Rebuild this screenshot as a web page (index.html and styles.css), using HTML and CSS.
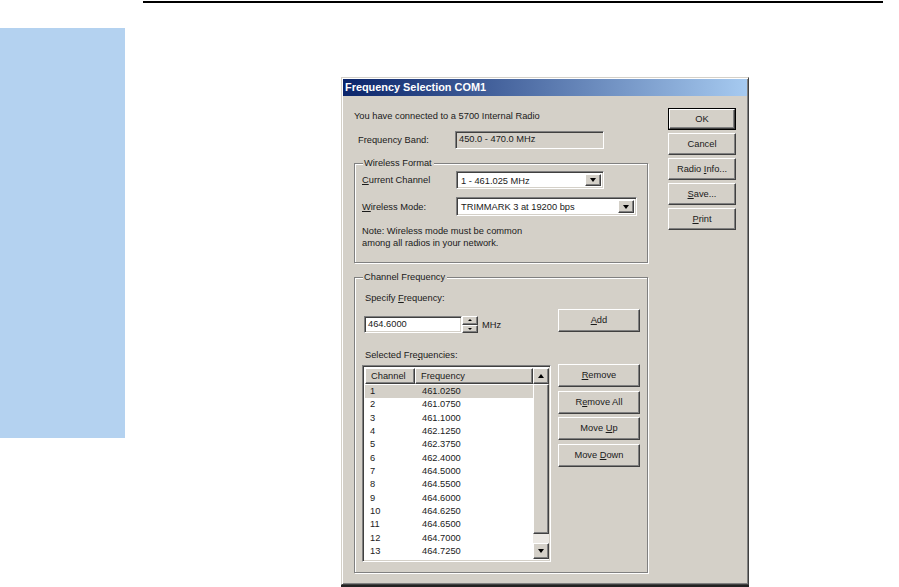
FILE: index.html
```html
<!DOCTYPE html>
<html>
<head>
<meta charset="utf-8">
<link rel="stylesheet" href="styles.css">
</head>
<body>
<div class="page">
  <div class="topline"></div>
  <div class="stage">
    <div class="sidebar"></div>
    <div class="dialog">
      <div class="titlebar">Frequency Selection COM1</div>
      <div class="client">
        <div class="main">
          <div class="intro">You have connected to a 5700 Internal Radio</div>
          <div class="bandrow">
            <span class="bandlbl">Frequency Band:</span>
            <div class="field sunken">450.0 - 470.0 MHz</div>
          </div>

          <div class="group wf">
            <span class="legend">Wireless Format</span>
            <div class="frow r1">
              <span class="flbl"><u>C</u>urrent Channel</span>
              <div class="combo sunken c1"><span class="ctext">1 - 461.025 MHz</span><span class="dbtn raised"><i class="tri-down"></i></span></div>
            </div>
            <div class="frow r2">
              <span class="flbl"><u>W</u>ireless Mode:</span>
              <div class="combo sunken c2"><span class="ctext">TRIMMARK 3 at 19200 bps</span><span class="dbtn raised"><i class="tri-down"></i></span></div>
            </div>
            <div class="note">Note: Wireless mode must be common<br>among all radios in your network.</div>
          </div>

          <div class="group cf">
            <span class="legend">Channel Frequency</span>
            <div class="cfrow">
              <div class="cfleft">
                <div class="lbl">Specify <u>F</u>requency:</div>
                <div class="editrow">
                  <div class="edit sunken">464.6000</div>
                  <div class="spin">
                    <span class="sbtn raised"><i class="tri-up sm"></i></span>
                    <span class="sbtn raised"><i class="tri-down sm"></i></span>
                  </div>
                  <span class="unit">MHz</span>
                </div>
              </div>
              <div class="btn addbtn raised"><u>A</u>dd</div>
            </div>
            <div class="cfrow2">
              <div class="cfleft">
                <div class="lbl sel">Selected Fre<u>q</u>uencies:</div>
                <div class="listbox sunken">
                  <div class="lvmain">
                    <div class="lvhead">
                      <span class="hcell h1 raised">Channel</span>
                      <span class="hcell h2 raised">Frequency</span>
                    </div>
                    <div class="rows">
                      <div class="lrow selrow"><span class="cn">1</span><span class="fq">461.0250</span></div>
                      <div class="lrow"><span class="cn">2</span><span class="fq">461.0750</span></div>
                      <div class="lrow"><span class="cn">3</span><span class="fq">461.1000</span></div>
                      <div class="lrow"><span class="cn">4</span><span class="fq">462.1250</span></div>
                      <div class="lrow"><span class="cn">5</span><span class="fq">462.3750</span></div>
                      <div class="lrow"><span class="cn">6</span><span class="fq">462.4000</span></div>
                      <div class="lrow"><span class="cn">7</span><span class="fq">464.5000</span></div>
                      <div class="lrow"><span class="cn">8</span><span class="fq">464.5500</span></div>
                      <div class="lrow"><span class="cn">9</span><span class="fq">464.6000</span></div>
                      <div class="lrow"><span class="cn">10</span><span class="fq">464.6250</span></div>
                      <div class="lrow"><span class="cn">11</span><span class="fq">464.6500</span></div>
                      <div class="lrow"><span class="cn">12</span><span class="fq">464.7000</span></div>
                      <div class="lrow"><span class="cn">13</span><span class="fq">464.7250</span></div>
                    </div>
                  </div>
                  <div class="vscroll">
                    <span class="sarrow raised"><i class="tri-up"></i></span>
                    <span class="thumb raised"></span>
                    <span class="track"></span>
                    <span class="sarrow raised"><i class="tri-down"></i></span>
                  </div>
                </div>
              </div>
              <div class="sidebtns">
                <div class="btn raised"><u>R</u>emove</div>
                <div class="btn raised">R<u>e</u>move All</div>
                <div class="btn raised">Move <u>U</u>p</div>
                <div class="btn raised">Move <u>D</u>own</div>
              </div>
            </div>
          </div>
        </div>

        <div class="buttons">
          <div class="defbtn"><div class="btn raised">OK</div></div>
          <div class="btn raised">Cancel</div>
          <div class="btn raised">Radio <u>I</u>nfo...</div>
          <div class="btn raised"><u>S</u>ave...</div>
          <div class="btn raised"><u>P</u>rint</div>
        </div>
      </div>
    </div>
  </div>
</div>
</body>
</html>
```

FILE: styles.css
```css
html, body {
  margin: 0;
  padding: 0;
  background: #fff;
}
body {
  width: 899px;
  height: 587px;
  overflow: hidden;
  font-family: "Liberation Sans", Arial, sans-serif;
  font-size: 9.3px;
  color: #1a1a1a;
}
u { text-decoration: underline; text-underline-offset: 1px; }

.topline {
  margin: 1px 0 0 143px;
  width: 740px;
  height: 2px;
  background: #000;
}
.stage {
  display: flex;
  align-items: flex-start;
}
.sidebar {
  width: 125px;
  height: 410px;
  margin-top: 25px;
  background: #b4d2f0;
}
.dialog {
  margin-left: 216px;
  margin-top: 74px;
  width: 404px;
  height: 504px;
  padding: 1px;
  background: #d4d0c8;
  border: 1px solid;
  border-color: #d4d0c8 #404040 #404040 #d4d0c8;
  box-shadow: inset 1px 1px 0 #fff, inset -1px -1px 0 #808080, 0 3px 0 #222;
}
.titlebar {
  height: 17px;
  line-height: 17px;
  padding-left: 2px;
  background: linear-gradient(to right, #0a246a, #a6caf0);
  color: #fff;
  font-weight: bold;
  font-size: 10.9px;
  white-space: nowrap;
}

.raised {
  border: 1px solid;
  border-color: #fff #404040 #404040 #fff;
  box-shadow: inset -1px -1px 0 #808080;
  background: #d4d0c8;
  box-sizing: border-box;
}
.sunken {
  border: 1px solid;
  border-color: #808080 #fff #fff #808080;
  box-shadow: inset 1px 1px 0 #404040, inset -1px -1px 0 #d4d0c8;
  box-sizing: border-box;
}

.client {
  display: flex;
  align-items: flex-start;
}
.main {
  margin-left: 11px;
  width: 294px;
}
.intro {
  margin-top: 14px;
  height: 13px;
  line-height: 13px;
  white-space: nowrap;
}
.bandrow {
  display: flex;
  align-items: center;
  margin-top: 8px;
  padding-left: 4px;
}
.bandlbl {
  width: 97px;
}
.field {
  width: 149px;
  height: 18px;
  line-height: 15px;
  padding-left: 3px;
  background: #d4d0c8;
  white-space: nowrap;
}

.group {
  border: 1px solid #808080;
  box-shadow: inset 1px 1px 0 #fff, 1px 1px 0 #fff;
  padding: 0 7px;
}
.legend {
  display: block;
  width: max-content;
  margin: -7px 0 0 1px;
  padding: 0 2px 0 1px;
  height: 12px;
  line-height: 12px;
  background: #d4d0c8;
}
.wf {
  margin-top: 14px;
  height: 100px;
  box-sizing: border-box;
}
.frow {
  display: flex;
  align-items: center;
}
.r1 { margin-top: 2px; }
.r2 { margin-top: 8px; }
.flbl { width: 94px; white-space: nowrap; }
.combo {
  height: 18px;
  background: #fff;
  display: flex;
  align-items: stretch;
  justify-content: space-between;
  padding: 2px;
}
.c1 { width: 148px; }
.c2 { width: 181px; }
.r2 .combo { height: 19px; }
.ctext {
  padding-left: 2px;
  line-height: 14px;
  white-space: nowrap;
}
.dbtn {
  width: 16px;
  display: flex;
  align-items: center;
  justify-content: center;
}
.tri-down, .tri-up {
  display: block;
  width: 0;
  height: 0;
  border-left: 3.5px solid transparent;
  border-right: 3.5px solid transparent;
}
.tri-down { border-top: 4px solid #000; }
.tri-up { border-bottom: 4px solid #000; }
.tri-down.sm, .tri-up.sm {
  border-left-width: 2px;
  border-right-width: 2px;
}
.tri-down.sm { border-top-width: 2px; }
.tri-up.sm { border-bottom-width: 2px; }

.note {
  margin-top: 9px;
  line-height: 12px;
  white-space: nowrap;
}

.cf {
  margin-top: 14px;
  height: 296px;
  box-sizing: border-box;
  padding-left: 7px;
}
.cfrow {
  display: flex;
  align-items: flex-end;
}
.cfleft {
  width: 198px;
}
.lbl {
  margin-top: 9px;
  margin-left: 3px;
  height: 12px;
  line-height: 12px;
  white-space: nowrap;
}
.editrow {
  display: flex;
  align-items: center;
  margin-top: 12px;
  margin-left: 2px;
}
.edit {
  width: 98px;
  height: 17px;
  background: #fff;
  line-height: 15px;
  padding-left: 3px;
}
.spin {
  width: 16px;
  height: 17px;
  display: flex;
  flex-direction: column;
}
.sbtn {
  height: 8.5px;
  display: flex;
  align-items: center;
  justify-content: center;
}
.unit {
  margin-left: 4px;
}
.btn {
  height: 23px;
  line-height: 21px;
  text-align: center;
  white-space: nowrap;
}
.addbtn {
  width: 83px;
  margin-bottom: 1px;
}
.cfrow2 {
  display: flex;
  align-items: flex-start;
}
.sel {
  margin-top: 16px;
}
.listbox {
  margin-top: 4px;
  width: 189px;
  height: 197px;
  background: #fff;
  display: flex;
  padding: 2px 1px 2px 2px;
}
.lvmain {
  flex: 1;
}
.lvhead {
  display: flex;
  height: 16px;
}
.hcell {
  height: 16px;
  line-height: 14px;
  padding-left: 5px;
  white-space: nowrap;
}
.h1 { width: 50px; }
.h2 { flex: 1; }
.rows {
  margin-top: 1px;
}
.lrow {
  display: flex;
  height: 13.33px;
  line-height: 13.33px;
}
.selrow { background: #d4d0c8; }
.cn { width: 57px; padding-left: 5px; box-sizing: border-box; }
.vscroll {
  width: 16px;
  display: flex;
  flex-direction: column;
}
.sarrow {
  height: 16px;
  display: flex;
  align-items: center;
  justify-content: center;
}
.thumb {
  height: 150px;
}
.track {
  flex: 1;
  background: #ece9e4;
}
.sidebtns {
  margin-top: 31px;
  width: 83px;
  display: flex;
  flex-direction: column;
  gap: 3.5px;
}

.buttons {
  margin-left: 20px;
  margin-top: 12px;
  width: 68px;
  display: flex;
  flex-direction: column;
  gap: 3px;
}
.buttons .btn {
  height: 22px;
  line-height: 20px;
}
.defbtn {
  border: 1px solid #000;
}
.defbtn .btn {
  height: 20px;
  line-height: 18px;
}
```
